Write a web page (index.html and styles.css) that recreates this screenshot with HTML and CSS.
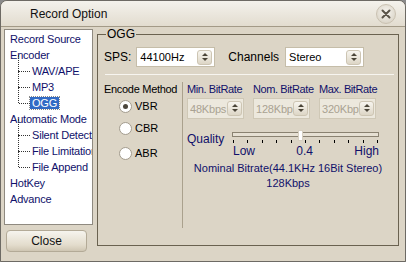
FILE: index.html
```html
<!DOCTYPE html>
<html lang="en">
<head>
  <meta charset="UTF-8" />
  <title>Record Option</title>
  <link rel="stylesheet" href="styles.css">
</head>
<body>
  <div class="window">
    <div class="titlebar">
      <span class="title">Record Option</span>
      <span class="close-x">
        <svg width="12" height="12" viewBox="0 0 12 12"><path d="M2.5 2.5 L9.5 9.5 M9.5 2.5 L2.5 9.5" stroke="#5a5448" stroke-width="2" stroke-linecap="round"/></svg>
      </span>
    </div>

    <div class="content">
      <div class="left">
        <ul class="tree">
          <li>Record Source</li>
          <li>Encoder</li>
          <li class="child">WAV/APE</li>
          <li class="child">MP3</li>
          <li class="child last"><span class="selected">OGG</span></li>
          <li>Automatic Mode</li>
          <li class="child">Silent Detect</li>
          <li class="child">File Limitation</li>
          <li class="child last">File Append</li>
          <li>HotKey</li>
          <li>Advance</li>
        </ul>
        <button class="close-btn">Close</button>
      </div>

      <fieldset class="group">
        <legend>OGG</legend>
        <div class="top-row">
          <span class="lbl">SPS:</span>
          <div class="select sps"><span>44100Hz</span><i class="spin"></i></div>
          <span class="lbl channels">Channels</span>
          <div class="select chan"><span>Stereo</span><i class="spin"></i></div>
        </div>
        <div class="rule"></div>

        <div class="lower">
          <div class="method">
            <div class="method-title">Encode Method</div>
            <label class="radio r1"><i class="dot checked"></i>VBR</label>
            <label class="radio r2"><i class="dot"></i>CBR</label>
            <label class="radio r3"><i class="dot"></i>ABR</label>
          </div>

          <div class="settings">
            <div class="rates">
              <div class="rate">
                <div class="rate-lbl">Min. BitRate</div>
                <div class="select off"><span>48Kbps</span><i class="spin"></i></div>
              </div>
              <div class="rate">
                <div class="rate-lbl">Nom. BitRate</div>
                <div class="select off"><span>128Kbps</span><i class="spin"></i></div>
              </div>
              <div class="rate">
                <div class="rate-lbl">Max. BitRate</div>
                <div class="select off"><span>320Kbps</span><i class="spin"></i></div>
              </div>
            </div>

            <div class="quality">
              <span class="q-lbl">Quality</span>
              <div class="slider">
                <div class="track"><i class="thumb"></i></div>
                <div class="ticks">
                  <i></i><i></i><i></i><i></i><i></i><i></i><i></i><i></i><i></i><i></i><i></i>
                </div>
                <div class="scale"><span>Low</span><span>0.4</span><span>High</span></div>
              </div>
            </div>

            <div class="nominal first">Nominal Bitrate(44.1KHz 16Bit Stereo)</div>
            <div class="nominal">128Kbps</div>
          </div>
        </div>
      </fieldset>
    </div>
  </div>
</body>
</html>
```

FILE: styles.css
```css
body {
  margin: 0;
  font-family: "Liberation Sans", Arial, sans-serif;
  font-size: 11px;
  color: #000;
  background: #8a8a8a;
}

.window {
  width: 406px;
  height: 262px;
  box-sizing: border-box;
  background: #dcd5c6;
  border: 1px solid #6d6a64;
  border-radius: 7px 7px 0 0;
  overflow: hidden;
}

.titlebar {
  height: 25px;
  display: flex;
  align-items: center;
  justify-content: space-between;
  padding: 0 9px 0 29px;
  background: linear-gradient(#f4f2ec, #e2dccf);
  border-bottom: 1px solid #a39a87;
}

.title {
  font-size: 12px;
  color: #111;
}

.close-x {
  width: 18px;
  height: 18px;
  border-radius: 50%;
  background: radial-gradient(circle at 50% 40%, #f7f5f0, #d3ccbd);
  border: 1px solid #c9c1b1;
  display: flex;
  align-items: center;
  justify-content: center;
}

.content {
  display: flex;
  padding: 2px 5px 0 3px;
  gap: 4px;
}

.left {
  width: 89px;
}

.tree {
  list-style: none;
  margin: 0;
  padding: 1px 0 0 5px;
  height: 193px;
  background: #fff;
  border: 1px solid #8f8a80;
  overflow: hidden;
}

.tree li {
  height: 16px;
  line-height: 16px;
  white-space: nowrap;
  letter-spacing: -0.2px;
  color: #10106a;
  position: relative;
}

.tree .child {
  padding-left: 22px;
}

.tree .child::before {
  content: "";
  position: absolute;
  left: 8px;
  top: -8px;
  height: 16px;
  border-left: 1px dotted #333;
}

.tree .child::after {
  content: "";
  position: absolute;
  left: 9px;
  top: 8px;
  width: 11px;
  border-top: 1px dotted #333;
}

.tree .selected {
  background: #316ac5;
  color: #fff;
  padding: 0 2px;
  outline: 1px dotted #888;
  margin-left: -2px;
}

.close-btn {
  margin: 5px 0 0 2px;
  width: 81px;
  height: 22px;
  font-family: inherit;
  font-size: 12px;
  color: #111;
  border: 1px solid #b3aa97;
  border-radius: 4px;
  background: linear-gradient(#f6f4ee, #e3dccc 70%, #cfc6b3);
}

.group {
  margin: -2px 0 0 0;
  padding: 5px 6px 0 6px;
  width: 302px;
  height: 219px;
  box-sizing: border-box;
  border: 1px solid #6a6250;
}

.group legend {
  padding: 0 1px;
  margin-left: 2px;
  font-size: 12px;
  line-height: 14px;
}

.top-row {
  display: flex;
  align-items: center;
  height: 22px;
}

.lbl {
  font-size: 12px;
  margin-right: 5px;
}

.channels {
  margin-left: 13px;
  margin-right: 6px;
}

.select {
  display: flex;
  align-items: center;
  box-sizing: border-box;
  height: 20px;
  background: #fff;
  border: 1px solid #c5bda9;
  padding: 0 2px 0 3px;
  font-size: 11px;
  white-space: nowrap;
}

.select span {
  flex: 1;
  min-width: 0;
  overflow: hidden;
}

.sps,
.chan {
  width: 79px;
}

.spin {
  flex: none;
  width: 15px;
  height: 15px;
  box-sizing: border-box;
  border: 1px solid #cdc5b3;
  border-radius: 3px;
  background: linear-gradient(#f7f5ef, #ddd6c6);
  position: relative;
}

.spin::before,
.spin::after {
  content: "";
  position: absolute;
  left: 4px;
  border-left: 3px solid transparent;
  border-right: 3px solid transparent;
}

.spin::before {
  top: 2px;
  border-bottom: 3px solid #4a4538;
}

.spin::after {
  top: 7px;
  border-top: 3px solid #4a4538;
}

.rule {
  height: 0;
  margin: 6px -2px 0 1px;
  border-top: 1px solid #f7f5f0;
}

.lower {
  display: flex;
  margin-top: 7px;
}

.method {
  width: 78px;
}

.method-title {
  font-size: 11px;
  line-height: 14px;
  letter-spacing: -0.3px;
  white-space: nowrap;
}

.radio {
  display: flex;
  align-items: center;
  font-size: 11px;
  margin-left: 15px;
}

.r1 { height: 20px; }
.r2 { height: 24px; }
.r3 { height: 26px; }

.dot {
  width: 11px;
  height: 11px;
  border: 1px solid #a39c8e;
  border-radius: 50%;
  background: #fff;
  margin-right: 3px;
  position: relative;
}

.dot.checked::after {
  content: "";
  position: absolute;
  left: 3px;
  top: 3px;
  width: 5px;
  height: 5px;
  border-radius: 50%;
  background: #4c473d;
}

.settings {
  border-left: 1px solid #aaa18d;
  padding-left: 4px;
  height: 146px;
  width: 207px;
  box-sizing: border-box;
}

.rates {
  display: flex;
  gap: 9px;
}

.rate {
  width: 57px;
}

.rate-lbl {
  font-size: 11px;
  line-height: 14px;
  letter-spacing: -0.4px;
  color: #10106a;
  white-space: nowrap;
}

.rate .select {
  width: 57px;
  height: 21px;
  margin-top: 2px;
  padding: 0 1px 0 2px;
  letter-spacing: -0.2px;
}

.select.off {
  background: #ece8dd;
  color: #a9a292;
  border-color: #cfc8b6;
}

.quality {
  display: flex;
  margin-top: 13px;
}

.q-lbl {
  font-size: 12px;
  line-height: 14px;
  color: #10106a;
  width: 45px;
}

.slider {
  width: 147px;
}

.track {
  height: 3px;
  border: 1px solid #8a8271;
  background: #e6e0d3;
  position: relative;
}

.thumb {
  position: absolute;
  left: 65px;
  top: -3px;
  width: 3px;
  height: 9px;
  background: #fff;
  border: 1px solid #d6cfc0;
}

.ticks {
  display: flex;
  justify-content: space-between;
  margin-top: 3px;
  padding: 0 1px;
}

.ticks i {
  width: 1px;
  height: 3px;
  background: #000;
}

.scale {
  display: flex;
  justify-content: space-between;
  font-size: 12px;
  color: #10106a;
  margin-top: 1px;
  line-height: 14px;
  padding-left: 1px;
}

.nominal {
  text-align: center;
  font-size: 11px;
  color: #10106a;
  line-height: 15px;
}

.nominal.first {
  margin-top: 3px;
}
```
